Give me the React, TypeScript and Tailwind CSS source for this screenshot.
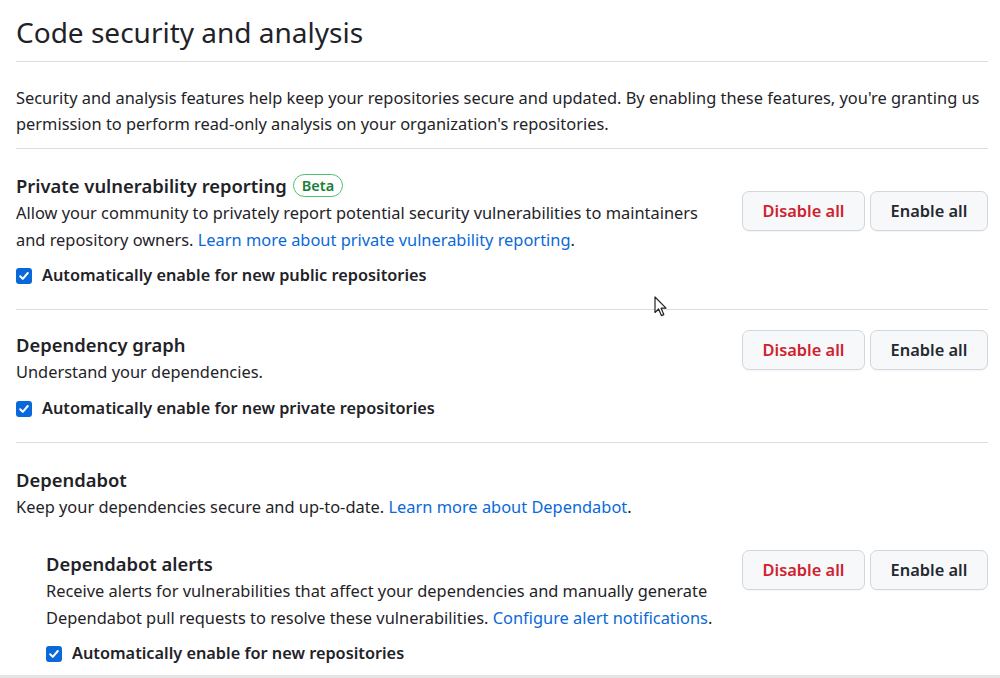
import React from "react";

const font = { fontFamily: '"Noto Sans", "Open Sans", sans-serif' };

function Buttons() {
  return (
    <div className="flex gap-[5px] shrink-0">
      <button className="h-[40px] w-[123px] rounded-[7px] border border-[#d0d7de] bg-[#f6f8fa] text-[16.4px] font-semibold text-[#cf222e] shadow-[0_1px_0_rgba(31,35,40,0.04)]">
        Disable all
      </button>
      <button className="h-[40px] w-[118px] rounded-[7px] border border-[#d0d7de] bg-[#f6f8fa] text-[16.4px] font-semibold text-[#24292f] shadow-[0_1px_0_rgba(31,35,40,0.04)]">
        Enable all
      </button>
    </div>
  );
}

function Check({ label }: { label: string }) {
  return (
    <div className="flex items-center gap-[10px] h-[27px]">
      <span className="w-[16px] h-[16px] rounded-[3px] bg-[#0969da] flex items-center justify-center">
        <svg width="12" height="12" viewBox="0 0 12 12" fill="none">
          <path d="M2.2 6.3 L4.8 8.9 L9.8 3" stroke="white" strokeWidth="2" strokeLinecap="round" strokeLinejoin="round" />
        </svg>
      </span>
      <span className="text-[16.3px] font-semibold text-[#1f2328] whitespace-nowrap">{label}</span>
    </div>
  );
}

export default function App() {
  return (
    <div className="relative h-[678px] w-[1000px] bg-white flex flex-col overflow-hidden text-[#1f2328]" style={font}>
      <div className="pl-[16px] pr-[12px]">
        <h1 className="pt-[12px] pb-[9px] text-[28px] leading-[40px] font-normal border-b border-[#d8dee4]">
          Code security and analysis
        </h1>
        <p className="mt-[23px] mb-[11px] text-[16.4px] leading-[26px] whitespace-nowrap">
          Security and analysis features help keep your repositories secure and updated. By enabling these features, you're granting us
          <br />
          permission to perform read-only analysis on your organization's repositories.
        </p>

        <div className="border-t border-[#d8dee4] flex justify-between items-start pb-[20px]">
          <div className="pt-[23px]">
            <div className="flex items-center gap-[6px] h-[27px]">
              <span className="text-[18.4px] font-semibold">Private vulnerability reporting</span>
              <span className="h-[23px] px-[8px] rounded-full border border-[#4ac26b] text-[#1a7f37] text-[14.5px] font-semibold flex items-center">Beta</span>
            </div>
            <p className="text-[16.4px] leading-[27px] whitespace-nowrap">
              Allow your community to privately report potential security vulnerabilities to maintainers
              <br />
              and repository owners. <a className="text-[#0969da]">Learn more about private vulnerability reporting</a>.
            </p>
            <div className="mt-[9px]">
              <Check label="Automatically enable for new public repositories" />
            </div>
          </div>
          <div className="pt-[42px]">
            <Buttons />
          </div>
        </div>

        <div className="border-t border-[#d8dee4] flex justify-between items-start pb-[20px]">
          <div className="pt-[21px]">
            <div className="text-[18.4px] font-semibold leading-[27px]">Dependency graph</div>
            <p className="text-[16.4px] leading-[27px]">Understand your dependencies.</p>
            <div className="mt-[10px]">
              <Check label="Automatically enable for new private repositories" />
            </div>
          </div>
          <div className="pt-[20px]">
            <Buttons />
          </div>
        </div>

        <div className="border-t border-[#d8dee4] pt-[23px]">
          <div className="text-[18.4px] font-semibold leading-[27px]">Dependabot</div>
          <p className="text-[16.4px] leading-[27px]">
            Keep your dependencies secure and up-to-date. <a className="text-[#0969da]">Learn more about Dependabot</a>.
          </p>
          <div className="mt-[30px] pl-[30px] flex justify-between items-start">
            <div>
              <div className="text-[18.4px] font-semibold leading-[27px]">Dependabot alerts</div>
              <p className="text-[16.4px] leading-[27px] whitespace-nowrap">
                Receive alerts for vulnerabilities that affect your dependencies and manually generate
                <br />
                Dependabot pull requests to resolve these vulnerabilities. <a className="text-[#0969da]">Configure alert notifications</a>.
              </p>
              <div className="mt-[9px]">
                <Check label="Automatically enable for new repositories" />
              </div>
            </div>
            <Buttons />
          </div>
        </div>
      </div>
      <div className="mt-auto h-[3px] bg-[#e4e4e4]" />
      <svg className="absolute left-[654px] top-[296px]" width="14" height="22" viewBox="0 0 14 22">
        <path d="M1 1 L1 16.5 L4.6 13 L7.4 19.6 L9.8 18.6 L7.1 12.2 L12 12.2 Z" fill="white" stroke="#222" strokeWidth="1.2" strokeLinejoin="round" />
      </svg>
    </div>
  );
}
